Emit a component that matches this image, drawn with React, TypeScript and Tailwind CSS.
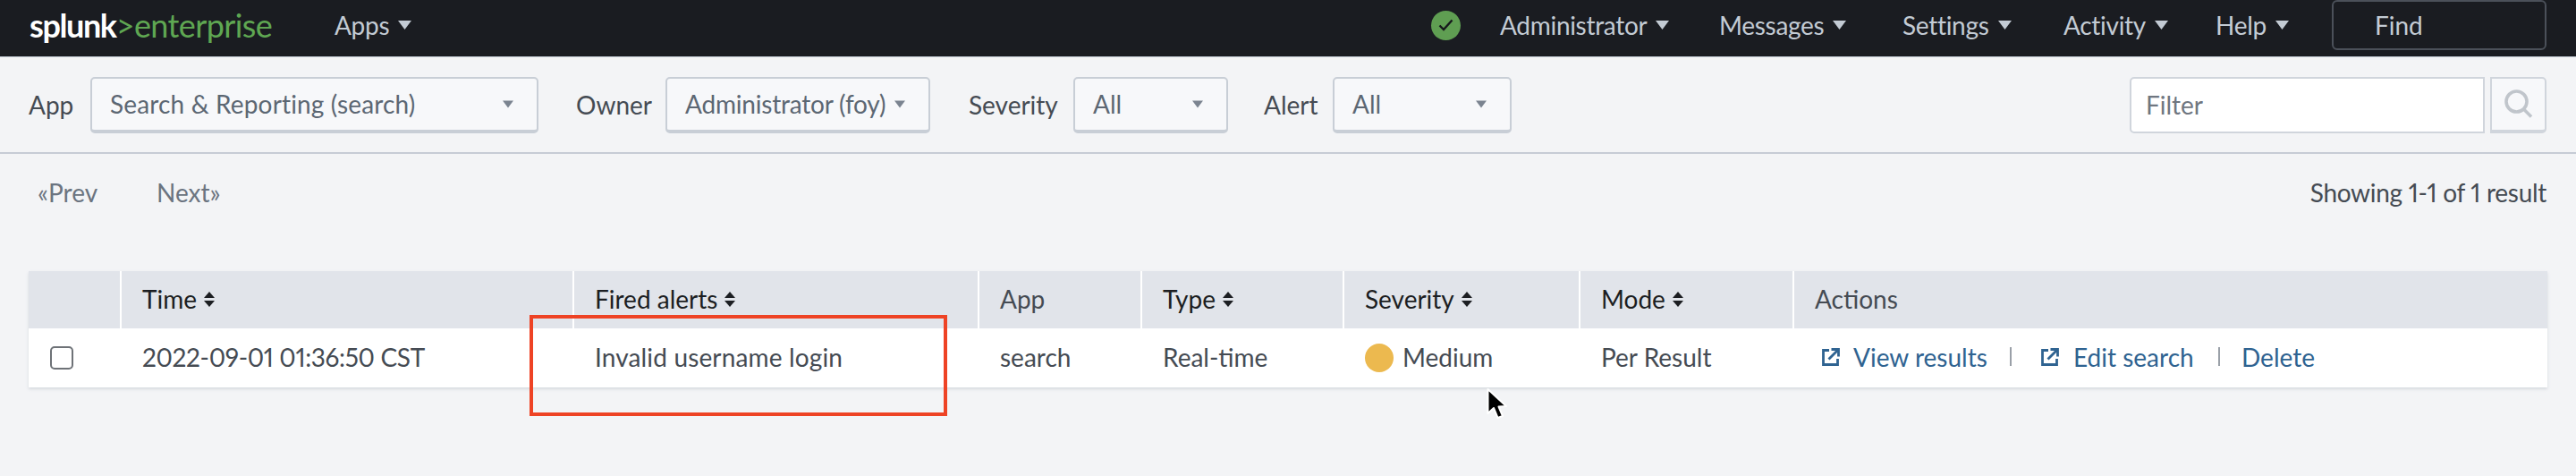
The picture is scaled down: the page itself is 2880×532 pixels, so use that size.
import React from "react";

const Caret = ({ w = 15, h = 10, color = "#c3cbd4" }: { w?: number; h?: number; color?: string }) => (
  <svg width={w} height={h} viewBox="0 0 15 10" className="shrink-0">
    <polygon points="0,0 15,0 7.5,10" fill={color} />
  </svg>
);

const Sort = () => (
  <svg width="12" height="17" viewBox="0 0 12 17" className="ml-[8px] shrink-0">
    <polygon points="6,0 12,7 0,7" fill="#1c1e22" />
    <polygon points="0,10 12,10 6,17" fill="#1c1e22" />
  </svg>
);

const Ext = () => (
  <svg width="20" height="20" viewBox="0 0 20 20" fill="none" stroke="#2f6391" strokeWidth="2.8" className="shrink-0">
    <path d="M8 2.5H1.5V18.5H17.5V12" />
    <path d="M7.5 12.5L18 2" />
    <path d="M10.5 1.5H18.5V9.5" />
  </svg>
);

const NavItem = ({ label, width }: { label: string; width: string }) => (
  <div className={`flex items-center gap-[10px] ${width}`}>
    <span className="tracking-[-0.3px]">{label}</span>
    <Caret />
  </div>
);

const Select = ({ label, width, textClass }: { label: string; width: string; textClass?: string }) => (
  <div
    className={`flex h-[63px] items-center justify-between rounded-[5px] border-2 border-b-[4px] border-[#c8ced6] bg-[#f7f8fa] pl-[20px] pr-[26px] text-[#5c6773] ${width}`}
  >
    <span className={`pb-[1px] ${textClass ?? ""}`}>{label}</span>
    <Caret w={12} h={9} color="#7b8490" />
  </div>
);

const Th = ({ label, sort }: { label: string; sort?: boolean }) => (
  <div
    className={`ml-[2px] flex items-center bg-[#e1e4ea] pb-[2px] pl-[23px] ${sort ? "text-[#1c1e22]" : "text-[#454b53]"}`}
  >
    {label}
    {sort && <Sort />}
  </div>
);

const Td = ({ children, className = "" }: { children?: React.ReactNode; className?: string }) => (
  <div className={`ml-[2px] flex items-center whitespace-nowrap pb-[3px] pl-[23px] text-[#454b53] ${className}`}>
    {children}
  </div>
);

export default function App() {
  return (
    <div
      className="relative h-[532px] w-[2880px] overflow-hidden bg-[#f3f4f6] text-[28px] leading-none proportional-nums"
      style={{ fontFamily: '"Lato", "Liberation Sans", sans-serif' }}
    >
      {/* Top bar */}
      <div className="flex h-[64px] items-center border-b border-[#c3cbd4] bg-[#1a1c21] pb-[7px] text-[#c3cbd4]">
        <div className="ml-[33px] flex w-[341px] items-baseline text-[36px] tracking-[-0.6px]">
          <span className="font-bold tracking-[-1.4px] text-white">splunk</span>
          <span className="text-[#5fa752]">&gt;enterprise</span>
        </div>
        <NavItem label="Apps" width="w-[120px]" />
        <div className="flex-1" />
        <div className="mr-[44px] flex h-[33px] w-[33px] items-center justify-center rounded-full bg-[#5f9e52]">
          <svg width="17" height="14" viewBox="0 0 17 14" fill="none" stroke="#16181c" strokeWidth="2.4">
            <path d="M1.5 7.5L6 12L15.5 1.5" />
          </svg>
        </div>
        <NavItem label="Administrator" width="w-[245px]" />
        <NavItem label="Messages" width="w-[205px]" />
        <NavItem label="Settings" width="w-[180px]" />
        <NavItem label="Activity" width="w-[170px]" />
        <NavItem label="Help" width="w-[130px]" />
        <div className="mr-[33px] flex h-[56px] w-[240px] items-center rounded-[6px] border-2 border-[#4b5059] pl-[46px]">
          Find
        </div>
      </div>

      {/* Filter toolbar */}
      <div className="flex h-[108px] items-center border-b-2 border-[#c6ccd5] pl-[32px] pr-[33px] text-[#454b53]">
        <span className="w-[69px]">App</span>
        <Select label="Search &amp; Reporting (search)" width="w-[501px]" textClass="tracking-[0.15px]" />
        <span className="ml-[42px] w-[100px]">Owner</span>
        <Select label="Administrator (foy)" width="w-[296px]" textClass="tracking-[-0.2px]" />
        <span className="ml-[43px] w-[117px]">Severity</span>
        <Select label="All" width="w-[173px]" />
        <span className="ml-[40px] w-[77px]">Alert</span>
        <Select label="All" width="w-[200px]" />
        <div className="flex-1" />
        <div className="flex h-[63px] w-[397px] items-center rounded-l-[5px] border-2 border-[#d0d5dc] bg-white pl-[16px] text-[#6f7680]">
          Filter
        </div>
        <div className="ml-[6px] flex h-[63px] w-[63px] items-center justify-center rounded-r-[5px] border-2 border-b-[4px] border-[#d0d5dc] bg-[#f7f8fa]">
          <svg width="32" height="32" viewBox="0 0 32 32" fill="none" stroke="#c0c5cb" strokeWidth="3.6">
            <circle cx="13.5" cy="13.5" r="11.5" />
            <path d="M21.5 22L30 30.5" />
          </svg>
        </div>
      </div>

      {/* Pagination */}
      <div className="flex h-[86px] items-center justify-between pl-[42px] pr-[33px]">
        <div className="flex text-[#6b7480]">
          <span className="w-[133px]">«Prev</span>
          <span>Next»</span>
        </div>
        <span className="tracking-[-0.3px] text-[#454b53]">Showing 1-1 of 1 result</span>
      </div>

      {/* Table */}
      <div className="mx-[32px] mt-[45px] grid w-[2816px] grid-cols-[102px_506px_453px_182px_226px_264px_239px_844px] grid-rows-[64px_66px] bg-white shadow-[0_2px_3px_rgba(180,186,196,0.45)]">
        <div className="bg-[#e1e4ea]" />
        <Th label="Time" sort />
        <Th label="Fired alerts" sort />
        <Th label="App" />
        <Th label="Type" sort />
        <Th label="Severity" sort />
        <Th label="Mode" sort />
        <Th label="Actions" />

        <div className="flex items-center pl-[24px]">
          <div className="h-[26px] w-[26px] rounded-[5px] border-2 border-[#6e7277] bg-white" />
        </div>
        <Td className="tracking-[-0.35px]">2022-09-01 01:36:50 CST</Td>
        <Td className="tracking-[0.15px]">Invalid username login</Td>
        <Td>search</Td>
        <Td>Real-time</Td>
        <Td>
          <span className="mr-[10px] mt-[3px] h-[32px] w-[32px] rounded-full bg-[#ecb94f]" />
          Medium
        </Td>
        <Td>Per Result</Td>
        <div className="ml-[2px] flex items-center whitespace-nowrap pb-[3px] pl-[31px] text-[#2f6391]">
          <Ext />
          <span className="ml-[15px] w-[149px]">View results</span>
          <span className="ml-[26px] h-[21px] w-[2px] bg-[#9aa0a8]" />
          <span className="ml-[33px]">
            <Ext />
          </span>
          <span className="ml-[16px] w-[134px]">Edit search</span>
          <span className="ml-[28px] h-[21px] w-[2px] bg-[#9aa0a8]" />
          <span className="ml-[24px]">Delete</span>
        </div>
      </div>

      {/* Red annotation box */}
      <div className="absolute left-[592px] top-[352px] h-[113px] w-[467px] border-[4px] border-[#ee4325]" />

      {/* Mouse pointer */}
      <svg className="absolute left-[1660px] top-[432px]" width="26" height="40" viewBox="0 0 26 40">
        <path
          d="M3.5 3L3.5 30L10 24L14.5 35L20 33L15.5 22.5L24 22Z"
          fill="#000"
          stroke="#fff"
          strokeWidth="2"
          strokeLinejoin="round"
        />
      </svg>
    </div>
  );
}
